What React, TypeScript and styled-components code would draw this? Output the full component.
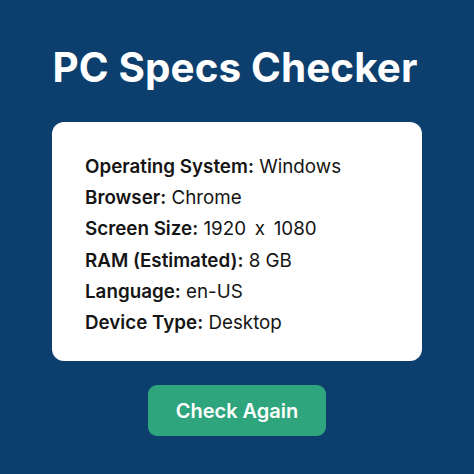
import React from "react";
import styled, { createGlobalStyle } from "styled-components";

const GlobalStyle = createGlobalStyle`
  html, body {
    margin: 0;
    padding: 0;
    background: #0c3f6e;
  }
  body {
    font-family: Inter, "Noto Sans", sans-serif;
  }
`;

const specs = [
  { label: "Operating System:", value: "Windows" },
  { label: "Browser:", value: "Chrome" },
  { label: "Screen Size:", value: "1920\u2009 x\u2009 1080" },
  { label: "RAM (Estimated):", value: "8 GB" },
  { label: "Language:", value: "en-US" },
  { label: "Device Type:", value: "Desktop" },
];

export default function App() {
  return (
    <>
      <GlobalStyle />
      <Page>
        <Title>PC Specs Checker</Title>
        <Card>
          {specs.map((s) => (
            <SpecRow key={s.label}>
              <Label>{s.label}</Label> {s.value}
            </SpecRow>
          ))}
        </Card>
        <CheckButton>Check Again</CheckButton>
      </Page>
    </>
  );
}

const Page = styled.main`
  width: 474px;
  height: 474px;
  box-sizing: border-box;
  display: flex;
  flex-direction: column;
  align-items: center;
  padding-top: 44px;
  background: #0c3f6e;
`;

const Title = styled.h1`
  margin: 0 4px 0 0;
  color: #ffffff;
  font-size: 40.4px;
  font-weight: 700;
  line-height: 48px;
  letter-spacing: 0.1px;
`;

const Card = styled.section`
  margin-top: 30px;
  width: 370px;
  height: 239px;
  box-sizing: border-box;
  background: #ffffff;
  border-radius: 12px;
  padding: 29px 33px;
  display: flex;
  flex-direction: column;
`;

const SpecRow = styled.p`
  margin: 0;
  font-size: 18.8px;
  line-height: 31.2px;
  color: #151515;
`;

const Label = styled.span`
  font-weight: 600;
`;

const CheckButton = styled.button`
  margin-top: 24px;
  width: 178px;
  height: 51px;
  border: none;
  border-radius: 9px;
  background: #2fa57e;
  color: #ffffff;
  font-family: Inter, "Noto Sans", sans-serif;
  font-size: 20px;
  font-weight: 600;
  cursor: pointer;
`;
